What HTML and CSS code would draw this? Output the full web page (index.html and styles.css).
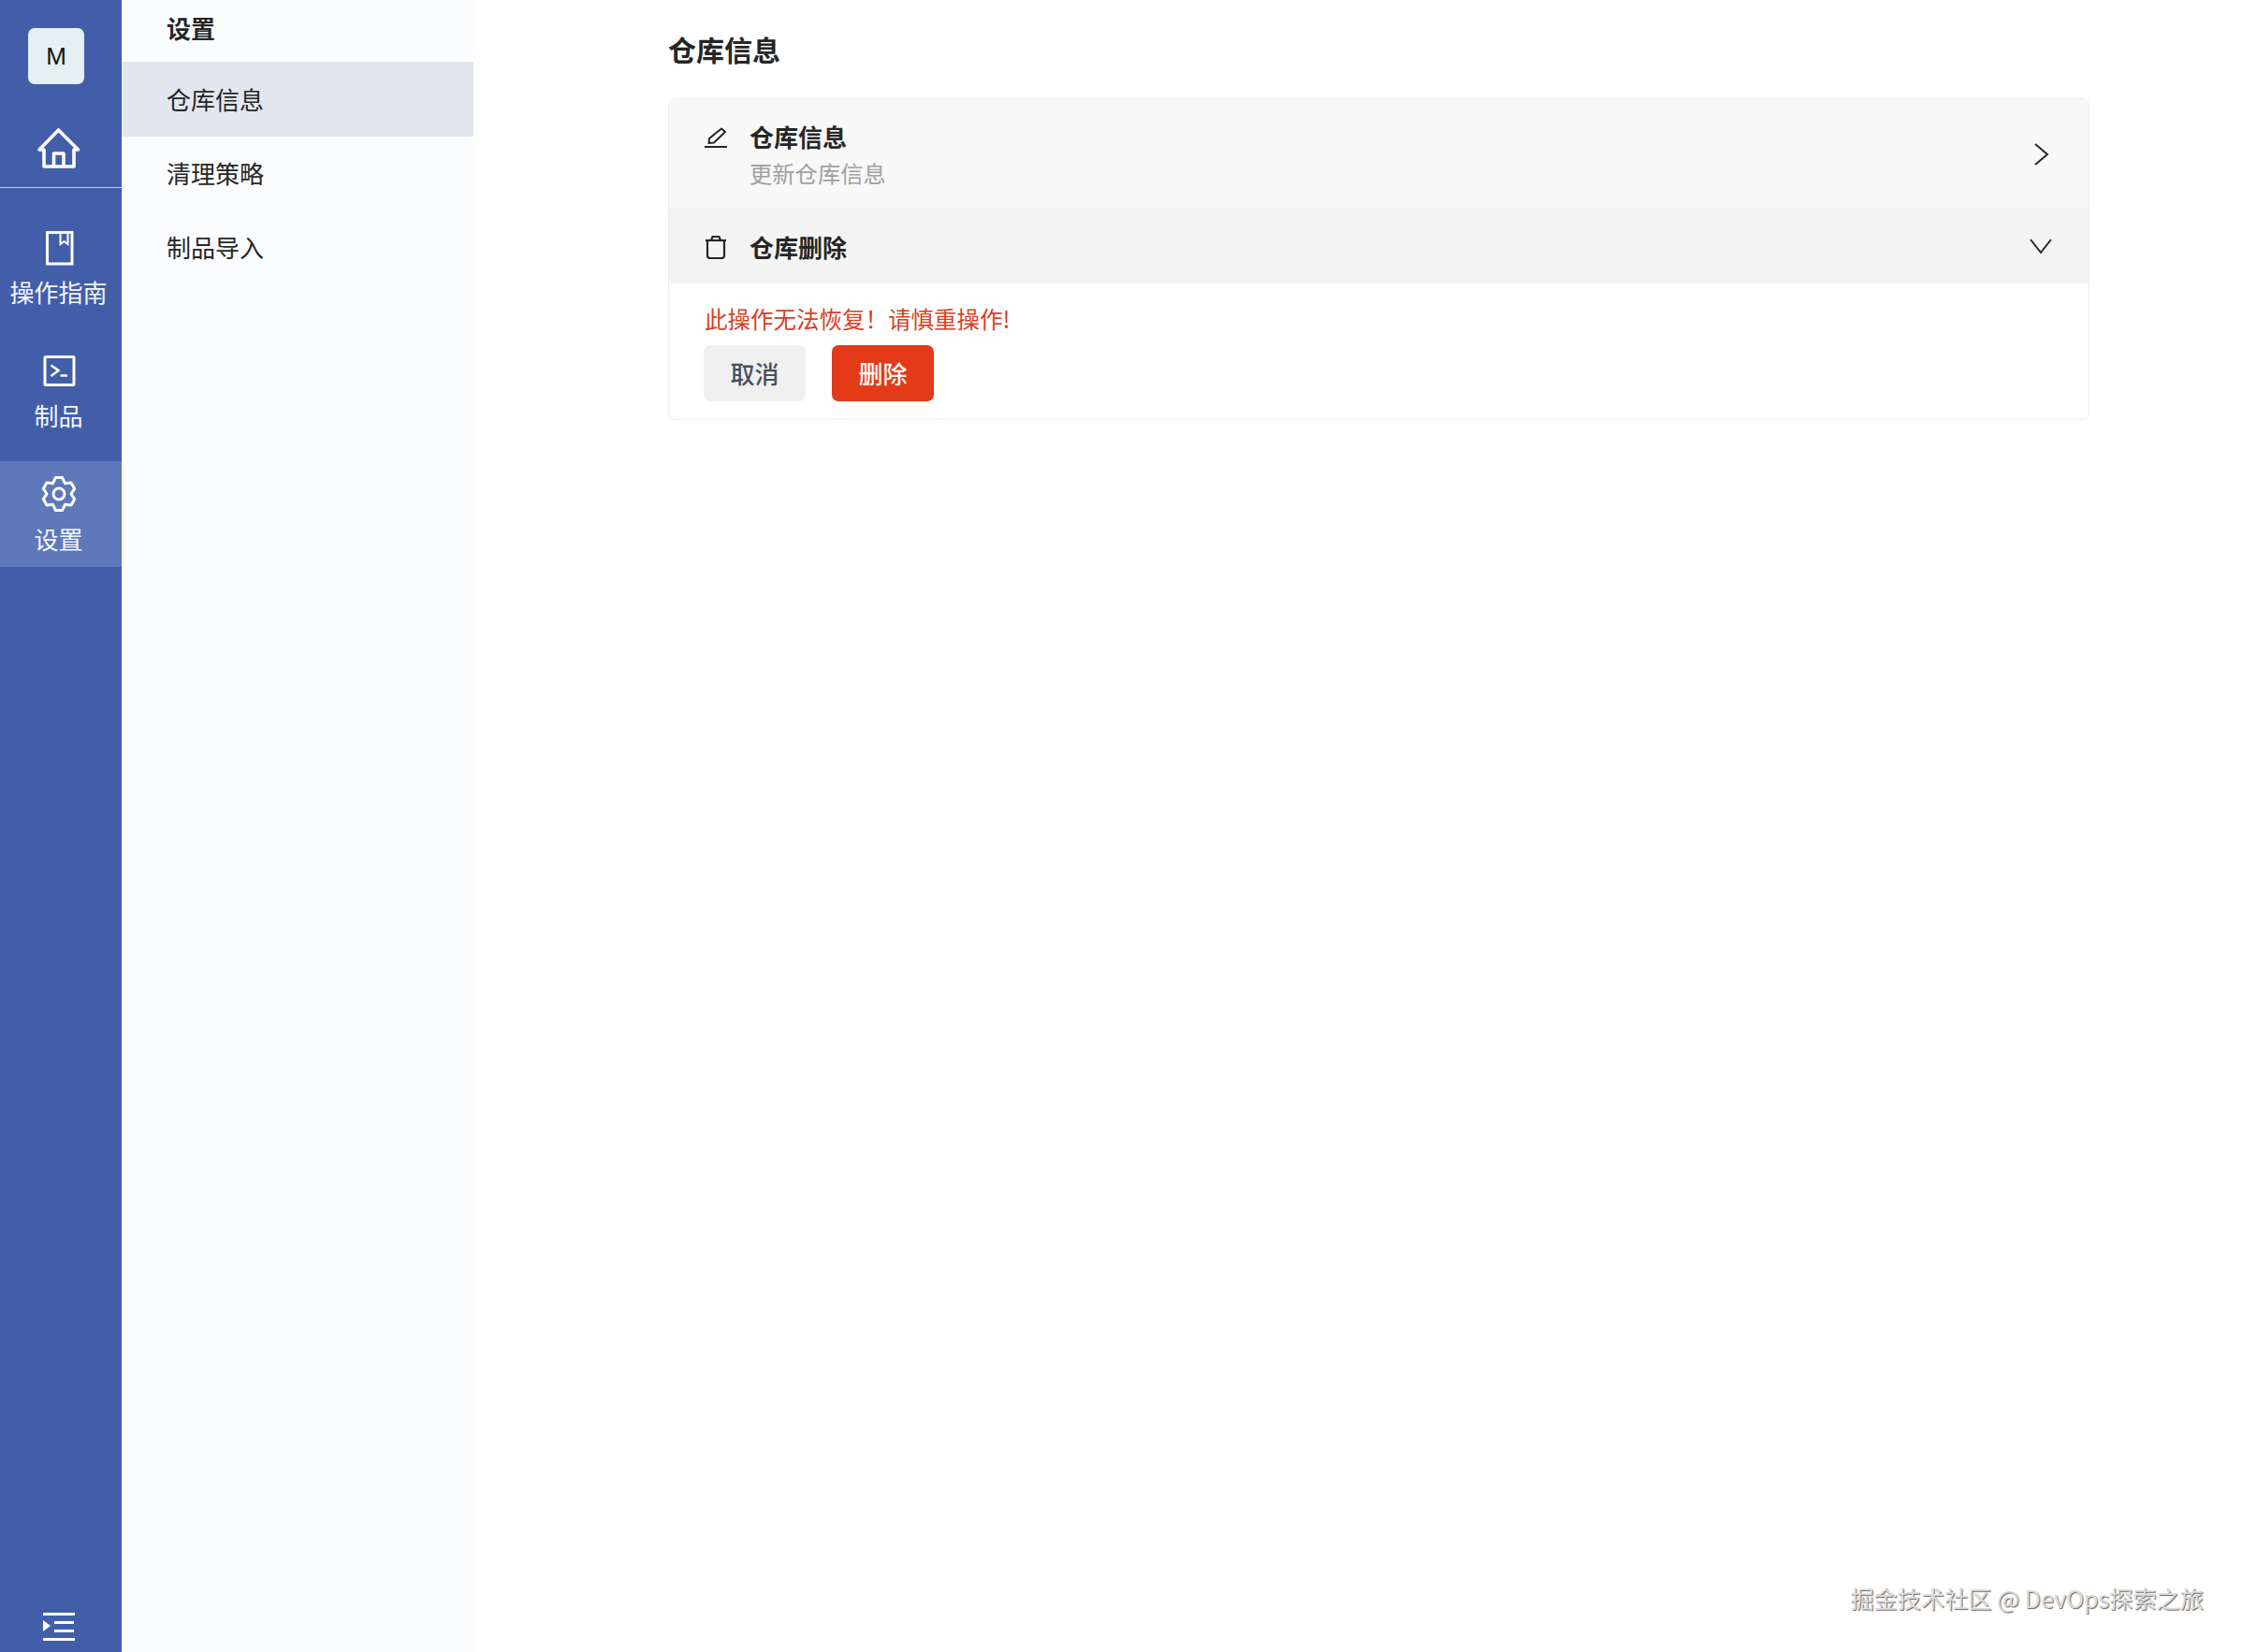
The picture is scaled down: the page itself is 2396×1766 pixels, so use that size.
FILE: index.html
```html
<!DOCTYPE html>
<html lang="zh-CN">
<head>
<meta charset="utf-8">
<title>仓库信息</title>
<link rel="stylesheet" href="styles.css">
</head>
<body>
<div class="app">
  <aside class="rail">
    <div class="logo">M</div>
    <svg class="home-icon" width="48" height="46" viewBox="0 0 48 46" fill="none" stroke="#fff" stroke-width="3.600" stroke-linejoin="round"><path d="M24.500 3L4 24H9V42H41V24H45.500Z"/><path d="M19.500 42V28H30V42"/></svg>
    <div class="rail-divider"></div>
    <nav class="rail-nav">
      <a class="rail-item">
        <svg class="rail-icon" viewBox="0 0 40 40" fill="none" stroke="#fff"><rect x="7.500" y="4.500" width="26.500" height="33.500" stroke-width="3"/><path d="M21.500 4.500V17L25.500 14L29.500 17V4.500" stroke-width="2"/></svg>
        <span class="rail-label">操作指南</span>
      </a>
      <a class="rail-item">
        <svg class="rail-icon" viewBox="0 0 40 40" fill="none" stroke="#fff"><rect x="5" y="5.500" width="31" height="30" rx="1" stroke-width="3"/><path d="M11.500 14.500L19.500 20L11.500 26" stroke-width="2.500"/><path d="M21.500 25.500H29" stroke-width="2.500"/></svg>
        <span class="rail-label">制品</span>
      </a>
      <a class="rail-item active">
        <svg class="rail-icon" viewBox="0 0 40 40" fill="none" stroke="#fff" stroke-width="3" stroke-linejoin="round"><path d="M16.500 2.500H23.500L26.500 8.700L33 8L36.700 14.400L33 20L36.700 25.600L33 32L26.500 31.300L23.500 37.500H16.500L13.500 31.300L7 32L3.300 25.600L7 20L3.300 14.400L7 8L13.500 8.700Z"/><circle cx="20" cy="20" r="6"/></svg>
        <span class="rail-label">设置</span>
      </a>
    </nav>
    <svg class="collapse-icon" width="36" height="32" viewBox="0 0 36 32" fill="#fff"><rect x="1" y="0" width="34" height="3"/><rect x="13" y="9" width="21" height="3"/><rect x="13" y="18" width="21" height="3"/><rect x="1" y="27" width="34" height="3"/><path d="M1 8L9 14L1 20Z"/></svg>
  </aside>

  <aside class="subnav">
    <div class="subnav-title">设置</div>
    <a class="subnav-item active">仓库信息</a>
    <a class="subnav-item">清理策略</a>
    <a class="subnav-item">制品导入</a>
  </aside>

  <main class="content">
    <h1 class="page-title">仓库信息</h1>
    <section class="card">
      <div class="row row-info">
        <svg class="row-icon row-icon-top" width="24" height="24" viewBox="0 0 24 24" fill="none" stroke="#262626" stroke-width="2" stroke-linejoin="round"><path d="M4.500 17L5 12L18 1.500L22 5L10 16.500Z"/><path d="M0 21H24"/></svg>
        <div class="row-text">
          <div class="row-title">仓库信息</div>
          <div class="row-sub">更新仓库信息</div>
        </div>
        <svg class="chevron" width="30" height="30" viewBox="0 0 30 30" fill="none" stroke="#262626" stroke-width="2"><path d="M9 4L22 15L9 26"/></svg>
      </div>
      <div class="row row-delete">
        <svg class="row-icon" width="24" height="26" viewBox="0 0 24 26" fill="none" stroke="#262626" stroke-width="2.200" stroke-linejoin="round"><path d="M1 6H23"/><path d="M7 6L8.500 2H15.500L17 6"/><path d="M3 6V22Q3 25 6 25H18Q21 25 21 22V6"/></svg>
        <div class="row-title">仓库删除</div>
        <svg class="chevron" width="30" height="30" viewBox="0 0 30 30" fill="none" stroke="#262626" stroke-width="2"><path d="M4 7L15 21L26 7"/></svg>
      </div>
      <div class="panel">
        <p class="warning">此操作无法恢复！请慎重操作!</p>
        <div class="actions">
          <button class="btn btn-cancel">取消</button>
          <button class="btn btn-danger">删除</button>
        </div>
      </div>
    </section>
    <div class="watermark">掘金技术社区 @ DevOps探索之旅</div>
  </main>
</div>
</body>
</html>
```

FILE: styles.css
```css
* { box-sizing: border-box; }

html, body {
  margin: 0;
  height: 100%;
  background: #fff;
  font-family: "Noto Sans CJK SC", "Noto Sans", sans-serif;
  color: #262626;
}

.app {
  display: flex;
  height: 100vh;
  overflow: hidden;
}

/* Left rail */
.rail {
  flex: 0 0 130px;
  display: flex;
  flex-direction: column;
  background: #435ea9;
  color: #fff;
}

.logo {
  width: 60px;
  height: 60px;
  margin: 30px 0 0 30px;
  display: flex;
  align-items: center;
  justify-content: center;
  border-radius: 7px;
  background: #e6f0f2;
  color: #111;
  font-family: "Liberation Sans", sans-serif;
  font-size: 26px;
}

.home-icon {
  display: block;
  margin: 46px 0 18px 38px;
}

.rail-divider {
  height: 1px;
  background: #c5cfe6;
}

.rail-nav {
  display: flex;
  flex-direction: column;
  gap: 19px;
  padding-top: 28px;
}

.rail-item {
  display: flex;
  flex-direction: column;
  align-items: center;
  height: 113px;
  padding: 15px 5px 12px 0;
}

.rail-item.active { background: #5f78ba; }

.rail-icon {
  display: block;
  width: 40px;
  height: 40px;
}

.rail-label {
  margin-top: 10px;
  font-size: 26px;
  line-height: 35px;
  white-space: nowrap;
  color: #f4f7fc;
}

.collapse-icon {
  display: block;
  margin: auto 0 10px 45px;
}

/* Secondary menu */
.subnav {
  flex: 0 0 376px;
  background: #fbfcfe;
}

.subnav-title {
  height: 66px;
  padding: 12px 0 0 48px;
  font-size: 26px;
  font-weight: 700;
  line-height: 36px;
}

.subnav-item {
  display: block;
  height: 79px;
  padding-left: 48px;
  font-size: 26px;
  line-height: 78px;
}

.subnav-item.active {
  height: 80px;
  line-height: 80px;
  background: #e3e6ef;
}

/* Main */
.content {
  position: relative;
  flex: 1;
  padding: 32px 163px 0 208px;
}

.page-title {
  margin: 0 0 33px;
  font-size: 30px;
  font-weight: 700;
  line-height: 40px;
}

.card {
  border: 1px solid #ececec;
  border-radius: 8px;
  overflow: hidden;
}

.row {
  display: flex;
  align-items: center;
  padding: 0 36px 0 38px;
}

.row-info {
  align-items: flex-start;
  height: 117px;
  padding-top: 22px;
  background: #f8f8f8;
  border-bottom: 1px solid #f1f1f1;
}

.row-delete {
  height: 80px;
  padding-top: 2px;
  background: #f4f4f4;
}

.row-icon {
  flex: none;
  display: block;
  margin-right: 24px;
}

.row-icon-top { margin-top: 8px; }

.row-text {
  display: flex;
  flex-direction: column;
  gap: 3px;
}

.row-title {
  font-size: 26px;
  font-weight: 700;
  line-height: 36px;
}

.row-sub {
  font-size: 24.300px;
  line-height: 36px;
  color: #a0a0a0;
}

.chevron {
  flex: none;
  display: block;
  margin-left: auto;
}

.row-info .chevron { margin-top: 22px; }

.panel {
  padding: 20px 38px 19px;
  background: #fff;
}

.warning {
  margin: 0 0 10px;
  font-size: 24.500px;
  line-height: 36px;
  color: #d8401f;
}

.actions {
  display: flex;
  gap: 28px;
  margin-left: -1px;
}

.btn {
  width: 109px;
  height: 60px;
  padding: 0 0 2px;
  border: 0;
  border-radius: 7px;
  font-family: inherit;
  font-size: 26px;
  font-weight: 500;
}

.btn-cancel {
  background: #f0f0f0;
  color: #46505f;
}

.btn-danger {
  background: #e33a18;
  color: #fff;
}

.watermark {
  position: absolute;
  right: 41px;
  bottom: 40px;
  font-size: 25.200px;
  line-height: 36px;
  white-space: nowrap;
  color: #dcdcdc;
  text-shadow: 1px 1px 1px #666;
}
```
